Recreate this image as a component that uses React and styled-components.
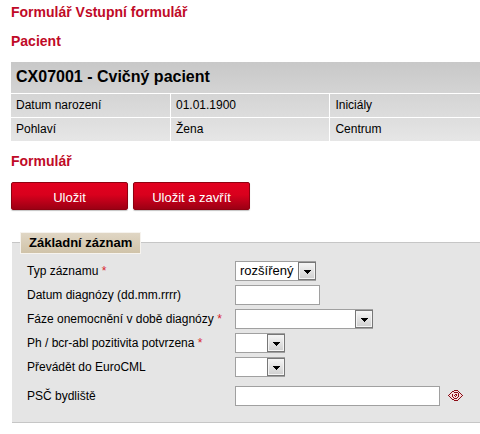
import React from 'react';
import styled, { createGlobalStyle } from 'styled-components';

const patient = {
    name: 'CX07001 - Cvičný pacient',
    rows: [
        ['Datum narození', '01.01.1900', 'Iniciály'],
        ['Pohlaví', 'Žena', 'Centrum'],
    ],
};

function Select({ id, options, width }) {
    return (
        <SelectBox $width={width}>
            <SelectInput id={id}>
                {options.map(option => <option key={option}>{option}</option>)}
            </SelectInput>
            <SelectArrow aria-hidden="true">
                <svg width="7" height="4" viewBox="0 0 7 4" shapeRendering="crispEdges">
                    <path d="M0 0h7v1H6v1H5v1H4v1H3V3H2V2H1V1H0z" fill="#000" />
                </svg>
            </SelectArrow>
        </SelectBox>
    );
}

function Field({ id, label, required, children }) {
    return (
        <>
            <Label htmlFor={id}>
                {label}{required && <Star> *</Star>}
            </Label>
            <Control>{children}</Control>
        </>
    );
}

function EyeIcon() {
    return (
        <svg width="15" height="11" viewBox="0 0 15 11" fill="none" shapeRendering="crispEdges">
            <path d="M1 5h1V4h1V3h2V1h5v2h2v1h1v1h1v1h-1v1h-1v1h-2v2H5V8H3V7H2V6H1z" fill="#f7dcdc" />
            <path d="M0 5h1v1H0zM1 4h1v1H1zM2 3h1v1H2zM3 2h1v1H3zM4 1h2v1H4zM6 0h4v1H6zM10 1h1v1h-1zM11 2h1v1h-1zM12 3h1v1h-1zM13 4h1v1h-1zM14 5h1v1h-1zM13 6h1v1h-1zM12 7h1v1h-1zM11 8h1v1h-1zM10 9h1v1h-1zM6 10h4v1H6zM4 9h2v1H4zM3 8h1v1H3zM2 7h1v1H2zM1 6h1v1H1z" fill="#8a0c16" />
            <path d="M6 2h4v1H6zM10 3h1v4h-1zM4 4h1v3H4zM5 7h1v1H5zM6 8h3v1H6zM9 7h1v1H9zM7 4h2v1H7zM6 5h1v1H6zM8 5h1v1H8zM7 6h1v1H7z" fill="#8a0c16" />
        </svg>
    );
}

function App() {
    return (
        <Page>
            <GlobalStyle />
            <Heading as="h1">Formulář Vstupní formulář</Heading>
            <Heading>Pacient</Heading>
            <PatientTable>
                <thead>
                    <tr>
                        <PatientName colSpan={3} scope="colgroup">{patient.name}</PatientName>
                    </tr>
                </thead>
                <tbody>
                    {patient.rows.map(row => (
                        <tr key={row[0]}>
                            {row.map(cell => <Cell key={cell}>{cell}</Cell>)}
                        </tr>
                    ))}
                </tbody>
            </PatientTable>

            <Heading>Formulář</Heading>
            <form onSubmit={e => e.preventDefault()}>
                <Buttons>
                    <Button type="submit">Uložit</Button>
                    <Button type="submit">Uložit a zavřít</Button>
                </Buttons>
                <Fieldset>
                    <Legend>Základní záznam</Legend>
                    <Fields>
                        <Field id="type" label="Typ záznamu" required>
                            <Select id="type" options={['rozšířený']} width="81px" />
                        </Field>
                        <Field id="date" label="Datum diagnózy (dd.mm.rrrr)">
                            <TextInput id="date" type="text" $width="85px" />
                        </Field>
                        <Field id="phase" label="Fáze onemocnění v době diagnózy" required>
                            <Select id="phase" options={['']} width="138px" />
                        </Field>
                        <Field id="ph" label="Ph / bcr-abl pozitivita potvrzena" required>
                            <Select id="ph" options={['']} width="50px" />
                        </Field>
                        <Field id="eurocml" label="Převádět do EuroCML">
                            <Select id="eurocml" options={['']} width="50px" />
                        </Field>
                    </Fields>
                    <Fields>
                        <Field id="zip" label="PSČ bydliště">
                            <TextInput id="zip" type="text" $width="205px" />
                            <IconButton type="button" aria-label="PSČ"><EyeIcon /></IconButton>
                        </Field>
                    </Fields>
                </Fieldset>
            </form>
        </Page>
    );
}

const GlobalStyle = createGlobalStyle`
        * {
                box-sizing:border-box;
        }
        body {
                margin:0;
                background:#fff;
                color:#000;
                font-family:"Liberation Sans", Arial, sans-serif;
                font-size:12px;
        }
`;

const Page = styled.main`
        padding:4px 0 12px 11px;
`;

const Heading = styled.h2`
        margin:0 0 12px;
        color:#c00a27;
        font-size:14px;
        line-height:17px;
`;

const PatientTable = styled.table`
        width:100%;
        margin-bottom:11px;
        border-collapse:collapse;
        background:linear-gradient(#c8c8c8, #e6e6e6);
`;

const PatientName = styled.th`
        height:31px;
        padding:0 5px;
        border-bottom:1px solid #fff;
        font-size:16px;
        text-align:left;
`;

const Cell = styled.td`
        width:34%;
        height:24px;
        padding:0 5px;
        border-bottom:1px solid #fff;
        & + & {
                border-left:1px solid #fff;
        }
        &:last-child {
                width:32%;
        }
`;

const Buttons = styled.div`
        display:flex;
        gap:5px;
        margin-bottom:22px;
`;

const Button = styled.button`
        width:117px;
        height:28px;
        padding:3px 0 0;
        border:1px solid #8f0010;
        border-radius:2px;
        background:linear-gradient(#e2001f, #d9001d 45%, #9c0014);
        box-shadow:0 1px 1px #c4c4c4;
        color:#fff;
        font-family:inherit;
        font-size:13px;
`;

const Fieldset = styled.fieldset`
        margin:0 0 0 1px;
        padding:7px 0 16px 15px;
        border:0 solid #c6c6c6;
        border-width:1px 0 1px 0;
        min-width:0;
        background:#e5e5e5;
`;

const Legend = styled.legend`
        margin-left:-7px;
        height:22px;
        padding:0 8px;
        border:1px solid #f6f3ee;
        background:linear-gradient(#e0d6c4, #d0c3a9);
        font-size:13px;
        font-weight:bold;
        line-height:20px;
`;

const Fields = styled.div`
        display:grid;
        grid-template-columns:208px 1fr;
        row-gap:4px;
        align-items:center;
        & + & {
                margin-top:9px;
        }
`;

const Label = styled.label`
        line-height:20px;
        white-space:nowrap;
`;

const Star = styled.span`
        color:#d8232f;
`;

const Control = styled.div`
        display:flex;
        align-items:center;
        gap:8px;
`;

const TextInput = styled.input`
        width:${props => props.$width};
        height:20px;
        padding:0 4px;
        border:1px solid #a0a0a0;
        background:#fff;
        font-family:inherit;
        font-size:13px;
`;

const SelectBox = styled.span`
        position:relative;
        display:block;
        width:${props => props.$width};
        height:20px;
`;

const SelectInput = styled.select`
        display:block;
        width:100%;
        height:100%;
        padding:0 18px 0 4px;
        border:1px solid #a0a0a0;
        border-radius:0;
        appearance:none;
        background:#fff;
        color:#000;
        font-family:inherit;
        font-size:13px;
`;

const SelectArrow = styled.span`
        position:absolute;
        top:1px;
        right:0;
        display:flex;
        align-items:center;
        justify-content:center;
        width:18px;
        height:18px;
        padding-top:2px;
        border:1px solid #777;
        background:linear-gradient(#f6f6f6, #cfcfcf);
        box-shadow:inset 0 0 0 1px #f4f4f4;
        pointer-events:none;
`;

const IconButton = styled.button`
        display:flex;
        padding:0;
        border:0;
        background:none;
`;

export default App;
